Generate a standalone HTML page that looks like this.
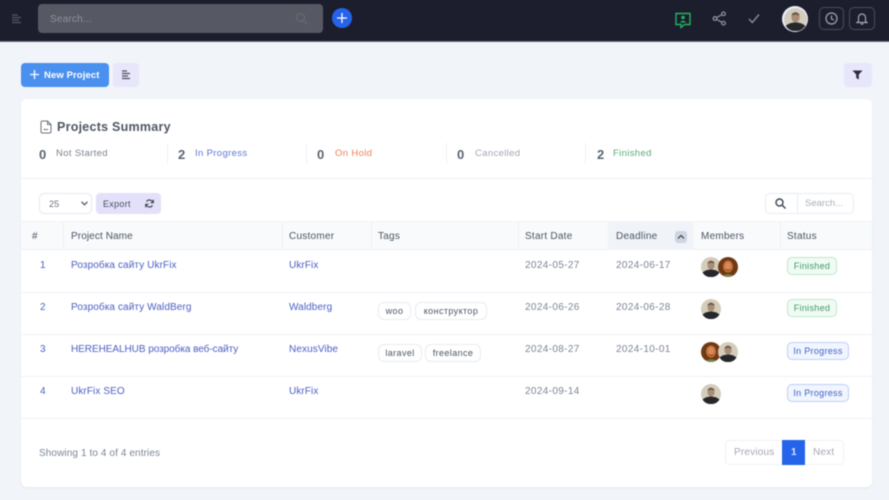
<!DOCTYPE html>
<html><head><meta charset="utf-8"><style>
*{box-sizing:border-box}
html,body{margin:0;padding:0;width:889px;height:500px;overflow:hidden;background:#f1f4f9}
body{font-family:"Liberation Sans","Noto Sans CJK SC",sans-serif;position:relative;color:#4b5563}
#r{position:absolute;left:0;top:0;width:889px;height:500px;filter:blur(.5px)}
.a{position:absolute}
.t{position:absolute;white-space:nowrap;line-height:14px;font-size:10px;letter-spacing:.1px}
.l{color:#4a5fc4}
.g{color:#7c8594;letter-spacing:.35px}
.h{color:#4b5563;font-size:10px;letter-spacing:.25px}
.tag{position:absolute;height:18px;border:1px solid #e8ecf2;border-radius:6px;font-size:9px;line-height:16px;text-align:center;color:#4b5563;letter-spacing:.4px;background:#fff}
.st{position:absolute;height:18px;border-radius:5px;font-size:9px;line-height:16px;text-align:center;letter-spacing:.3px}
.fin{background:#f0fbf4;border:1px solid #bfe8cd;color:#3f9a63}
.pr{background:#f0f5ff;border:1px solid #bcd0f5;color:#3f62c8}
.n{font-size:13px;font-weight:bold;color:#5b6472;letter-spacing:0}
.s{font-size:9.500px;letter-spacing:.35px}
.d{position:absolute;width:1px;height:20px;top:143px;background:#eceff3}
.v{position:absolute;width:1px;top:222px;height:28px;background:#eef1f5}
.hl{position:absolute;left:21px;width:851px;height:1px;background:#eff2f6}
</style></head><body><div id="r">
<svg width="0" height="0" style="position:absolute"><defs>
<symbol id="m" viewBox="0 0 20 20"><circle cx="10" cy="10" r="10" fill="#d4cdbb"/><ellipse cx="10" cy="8" rx="3.600" ry="4.600" fill="#a98d78"/><path d="M6.500 5.500Q10 2 13.500 5.500L13 6.500Q10 5 7 6.500Z" fill="#6a5a4e"/><path d="M1.500 15.500Q5 12.500 10 12.500T18.500 15.500A10 10 0 0 1 1.500 15.500Z" fill="#26272b"/></symbol>
<symbol id="w" viewBox="0 0 20 20"><circle cx="10" cy="10" r="10" fill="#6e3a14"/><ellipse cx="10" cy="9.500" rx="5" ry="6" fill="#c8713a"/><ellipse cx="10" cy="9" rx="3" ry="4" fill="#d48a5c"/><path d="M7.500 12.500Q10 14 12.500 12.500" stroke="#9b3a20" fill="none"/><path d="M5 18.500Q10 16 15 18.500A10 10 0 0 1 5 18.500Z" fill="#6f8a4a"/></symbol>
</defs></svg>

<!-- header -->
<div class="a" style="left:-6px;top:-6px;width:901px;height:48px;background:#1c1e2e;border-bottom:1px solid #6d7180"></div>
<svg class="a" style="left:12px;top:14px" width="11" height="10" stroke="#4d5568" stroke-width="1.300"><path d="M0 1H6M0 3.500H9M0 6H7M0 8.500H9"/></svg>
<div class="a" style="left:38px;top:4px;width:285px;height:29px;background:#565863;border-radius:4px"></div>
<div class="t" style="left:50px;top:12px;color:#8e929c;font-size:10px;letter-spacing:.2px;margin-top:.5px">Search...</div>
<svg class="a" style="left:295px;top:12px" width="13" height="13" fill="none" stroke="#666974" stroke-width="1.300"><circle cx="5.500" cy="5.500" r="4"/><path d="M8.500 8.500L12 12"/></svg>
<div class="a" style="left:332px;top:8px;width:20px;height:20px;border-radius:50%;background:#2563eb"></div>
<svg class="a" style="left:337px;top:13px" width="10" height="10" stroke="#fff" stroke-width="1.300"><path d="M5 0V10M0 5H10"/></svg>

<svg class="a" style="left:675px;top:12px" width="16" height="17" fill="none"><path d="M1 1.500H15V12.500H9.500L6 15.500V12.500H1Z" stroke="#22b35e" stroke-width="1.400"/><circle cx="8" cy="5.500" r="1.800" fill="#22b35e"/><path d="M4.800 10.500Q8 6.800 11.200 10.500Z" fill="#22b35e"/></svg>
<svg class="a" style="left:712px;top:11px" width="15" height="15" fill="none" stroke="#8a8d99" stroke-width="1.300"><circle cx="11.500" cy="2.800" r="1.800"/><circle cx="3" cy="7.500" r="1.800"/><circle cx="11.500" cy="12.200" r="1.800"/><path d="M4.600 6.600L9.900 3.700M4.600 8.400L9.900 11.300"/></svg>
<svg class="a" style="left:748px;top:13px" width="12" height="11" fill="none" stroke="#8a8d99" stroke-width="1.400"><path d="M1 6L4.300 9.500L11 1.500"/></svg>
<div class="a" style="left:782px;top:6px;width:26px;height:26px;border-radius:50%;background:#e8f0ff;padding:1.500px"><svg width="23" height="23" style="display:block"><use href="#m" width="23" height="23"/></svg></div>
<div class="a" style="left:819px;top:7px;width:25px;height:23px;border:1px solid #4a4d5c;border-radius:5px"></div>
<svg class="a" style="left:825px;top:12px" width="13" height="13" fill="none" stroke="#a2a5af" stroke-width="1.200"><circle cx="6.500" cy="6.500" r="5.500"/><path d="M6.500 3.500V7L9 8"/></svg>
<div class="a" style="left:849px;top:7px;width:26px;height:23px;border:1px solid #4a4d5c;border-radius:5px"></div>
<svg class="a" style="left:856px;top:12px" width="12" height="13" fill="none" stroke="#a2a5af" stroke-width="1.200"><path d="M2.500 9.500V5.500A3.500 3.500 0 0 1 9.500 5.500V9.500L11 10.500H1Z"/><path d="M4.800 11.500Q6 13 7.200 11.500"/></svg>

<!-- toolbar -->
<div class="a" style="left:21px;top:63px;width:88px;height:24px;background:#4a90ee;border-radius:4px"></div>
<svg class="a" style="left:30px;top:70px" width="9" height="9" stroke="#fff" stroke-width="1.300"><path d="M4.500 0V9M0 4.500H9"/></svg>
<div class="t" style="left:44px;top:68px;color:#fff;font-weight:bold;font-size:9.500px;letter-spacing:.1px;line-height:14px;margin-top:1px">New Project</div>
<div class="a" style="left:113px;top:63px;width:26px;height:24px;background:#e8e6fb;border-radius:4px"></div>
<svg class="a" style="left:121px;top:70px" width="10" height="10" stroke="#4b5063" stroke-width="1.200"><path d="M1 1H6M1 3.500H9M1 6H7M1 8.500H9"/></svg>
<div class="a" style="left:844px;top:63px;width:28px;height:24px;background:#e8e6fb;border-radius:4px"></div>
<svg class="a" style="left:852px;top:70px" width="11" height="10"><path d="M.5 .5H10.500L6.800 4.500V9.500L4.200 8V4.500Z" fill="#2b2f3e"/></svg>

<!-- card -->
<div class="a" style="left:21px;top:99px;width:851px;height:388px;background:#fff;border-radius:6px;box-shadow:0 1px 2px rgba(90,100,130,.08)"></div>
<svg class="a" style="left:40px;top:120px" width="12" height="14" fill="none" stroke="#6b7280" stroke-width="1"><path d="M1 2.500Q1 1 2.500 1H7.500L11 4.500V11.500Q11 13 9.500 13H2.500Q1 13 1 11.500Z"/><path d="M7.500 1V4.500H11M3.500 9.500H8"/></svg>
<div class="t" style="left:57px;top:120px;font-size:12.500px;font-weight:bold;color:#4f5765;letter-spacing:.25px">Projects Summary</div>

<div class="t n" style="left:39px;top:148px">0</div><div class="t s" style="left:56px;top:147px;color:#7a828e">Not Started</div>
<div class="d" style="left:167px"></div>
<div class="t n" style="left:178px;top:148px">2</div><div class="t s" style="left:195px;top:147px;color:#5b78d6">In Progress</div>
<div class="d" style="left:306px"></div>
<div class="t n" style="left:317px;top:148px">0</div><div class="t s" style="left:335px;top:147px;color:#f0805a">On Hold</div>
<div class="d" style="left:446px"></div>
<div class="t n" style="left:457px;top:148px">0</div><div class="t s" style="left:475px;top:147px;color:#a0a6b4">Cancelled</div>
<div class="d" style="left:585px"></div>
<div class="t n" style="left:597px;top:148px">2</div><div class="t s" style="left:613px;top:147px;color:#5aaa78">Finished</div>
<div class="hl" style="top:178px;background:#eef0f4"></div>

<!-- controls -->
<div class="a" style="left:39px;top:193px;width:53px;height:21px;border:1px solid #e5e8ee;border-radius:5px;background:#fff"></div>
<div class="t" style="left:49px;top:197px;font-size:9px;color:#6b7280">25</div>
<svg class="a" style="left:81px;top:201px" width="7" height="5" fill="none" stroke="#4b5563" stroke-width="1.200"><path d="M.5 .8L3.500 3.800L6.500 .8"/></svg>
<div class="a" style="left:96px;top:193px;width:65px;height:21px;background:#e3e1f9;border-radius:4px"></div>
<div class="t" style="left:103px;top:197px;font-size:9px;color:#474d60;letter-spacing:.3px">Export</div>
<svg class="a" style="left:145px;top:199px" width="9" height="9" fill="none" stroke="#3a3f50" stroke-width="1.100"><path d="M8 3.500A3.700 3.700 0 0 0 1.500 2.500M1 5.500A3.700 3.700 0 0 0 7.500 6.500"/><path d="M8.300 .8V3.700H5.500M.7 8.200V5.300H3.500"/></svg>
<div class="a" style="left:765px;top:193px;width:33px;height:21px;border:1px solid #e9ecf2;border-radius:5px 0 0 5px;background:#fff"></div>
<svg class="a" style="left:775px;top:198px" width="11" height="11" fill="none" stroke="#3d4452" stroke-width="1.400"><circle cx="4.500" cy="4.500" r="3.500"/><path d="M7 7L10.500 10.500"/></svg>
<div class="a" style="left:797px;top:193px;width:57px;height:21px;border:1px solid #e9ecf2;border-radius:0 5px 5px 0;background:#fff"></div>
<div class="t" style="left:805px;top:197px;font-size:9.500px;color:#a9aebb;letter-spacing:0">Search...</div>

<!-- table head -->
<div class="a" style="left:21px;top:221px;width:851px;height:29px;background:#f8fafc;border-top:1px solid #f1f3f7;border-bottom:1px solid #eff2f6"></div>
<div class="a" style="left:608px;top:222px;width:85px;height:28px;background:#f0f3f8"></div>
<div class="v" style="left:63px"></div><div class="v" style="left:282px"></div><div class="v" style="left:371px"></div><div class="v" style="left:518px"></div><div class="v" style="left:780px"></div>
<div class="t h" style="left:32px;top:229px;margin-top:.6px">#</div>
<div class="t h" style="left:71px;top:229px;margin-top:.6px;letter-spacing:.1px">Project Name</div>
<div class="t h" style="left:289px;top:229px;margin-top:.6px">Customer</div>
<div class="t h" style="left:378px;top:229px;margin-top:.6px">Tags</div>
<div class="t h" style="left:525px;top:229px;margin-top:.6px">Start Date</div>
<div class="t h" style="left:616px;top:229px;margin-top:.6px">Deadline</div>
<div class="a" style="left:675px;top:231px;width:12px;height:12px;background:#cfd6e2;border-radius:3px"></div>
<svg class="a" style="left:677px;top:234px" width="8" height="6" fill="none" stroke="#2d3342" stroke-width="1.100"><path d="M1 4.500L4 1.500L7 4.500"/></svg>
<div class="t h" style="left:701px;top:229px;margin-top:.6px">Members</div>
<div class="t h" style="left:787px;top:229px;margin-top:.6px">Status</div>

<!-- rows -->
<div class="hl" style="top:292px"></div><div class="hl" style="top:334px"></div><div class="hl" style="top:376px"></div><div class="hl" style="top:418px"></div>

<div class="t l" style="left:40px;top:259px">1</div>
<div class="t l" style="left:71px;top:259px">Розробка сайту UkrFix</div>
<div class="t l" style="left:289px;top:259px">UkrFix</div>
<div class="t g" style="left:525px;top:259px">2024-05-27</div>
<div class="t g" style="left:616px;top:259px">2024-06-17</div>
<svg class="a" style="left:701px;top:257px" width="20" height="20"><use href="#m" width="20" height="20"/></svg>
<svg class="a" style="left:718px;top:257px" width="20" height="20"><use href="#w" width="20" height="20"/></svg>
<div class="st fin" style="left:787px;top:257px;width:50px">Finished</div>

<div class="t l" style="left:40px;top:301px">2</div>
<div class="t l" style="left:71px;top:301px">Розробка сайту WaldBerg</div>
<div class="t l" style="left:289px;top:301px">Waldberg</div>
<div class="tag" style="left:378px;top:302px;width:33px">woo</div>
<div class="tag" style="left:415px;top:302px;width:72px">конструктор</div>
<div class="t g" style="left:525px;top:301px">2024-06-26</div>
<div class="t g" style="left:616px;top:301px">2024-06-28</div>
<svg class="a" style="left:701px;top:299px" width="20" height="20"><use href="#m" width="20" height="20"/></svg>
<div class="st fin" style="left:787px;top:299px;width:50px">Finished</div>

<div class="t l" style="left:40px;top:343px">3</div>
<div class="t l" style="left:71px;top:343px;letter-spacing:-.05px">HEREHEALHUB розробка веб-сайту</div>
<div class="t l" style="left:289px;top:343px">NexusVibe</div>
<div class="tag" style="left:378px;top:344px;width:44px">laravel</div>
<div class="tag" style="left:425px;top:344px;width:56px">freelance</div>
<div class="t g" style="left:525px;top:343px">2024-08-27</div>
<div class="t g" style="left:616px;top:343px">2024-10-01</div>
<svg class="a" style="left:701px;top:342px" width="20" height="20"><use href="#w" width="20" height="20"/></svg>
<svg class="a" style="left:718px;top:342px" width="20" height="20"><use href="#m" width="20" height="20"/></svg>
<div class="st pr" style="left:787px;top:342px;width:62px">In Progress</div>

<div class="t l" style="left:40px;top:385px">4</div>
<div class="t l" style="left:71px;top:385px">UkrFix SEO</div>
<div class="t l" style="left:289px;top:385px">UkrFix</div>
<div class="t g" style="left:525px;top:385px">2024-09-14</div>
<svg class="a" style="left:701px;top:384px" width="20" height="20"><use href="#m" width="20" height="20"/></svg>
<div class="st pr" style="left:787px;top:384px;width:62px">In Progress</div>

<!-- footer -->
<div class="t" style="left:39px;top:447px;color:#7c8594;letter-spacing:.1px">Showing 1 to 4 of 4 entries</div>
<div class="a" style="left:725px;top:440px;width:119px;height:25px;border:1px solid #eef1f5;border-radius:4px;background:#fff"></div>
<div class="t" style="left:734px;top:446px;color:#a4a9b6;letter-spacing:.2px">Previous</div>
<div class="a" style="left:782px;top:440px;width:23px;height:25px;background:#2563eb"></div>
<div class="t" style="left:791px;top:446px;color:#dbe6ff;font-weight:bold">1</div>
<div class="t" style="left:813px;top:446px;color:#a4a9b6;letter-spacing:.2px">Next</div>
</div></body></html>
